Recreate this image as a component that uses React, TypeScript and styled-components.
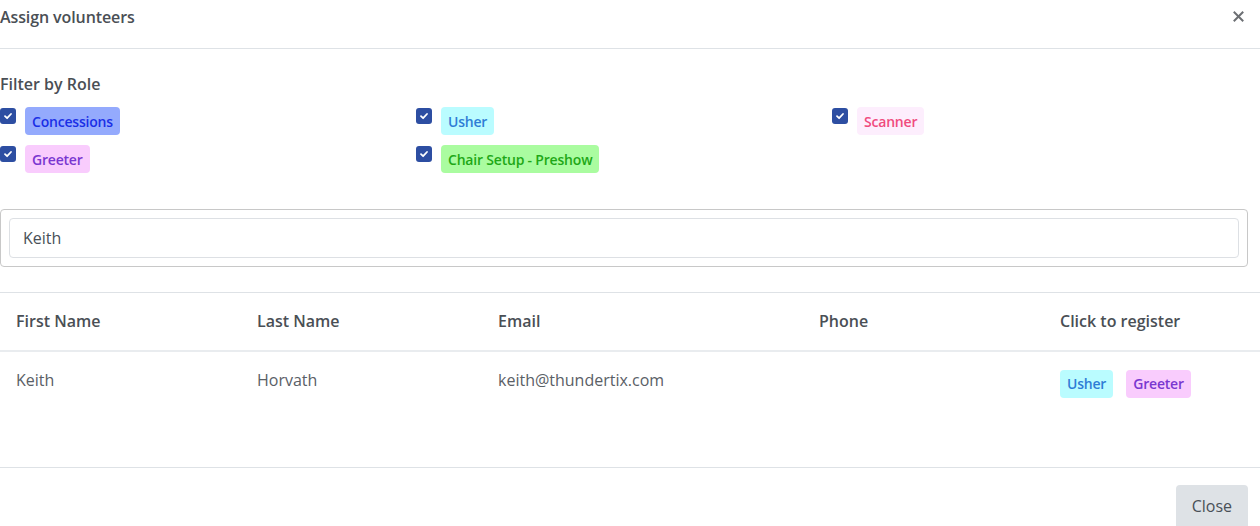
import React from 'react'
import styled, { createGlobalStyle } from 'styled-components'

const GlobalStyle = createGlobalStyle`
  html, body {
    margin: 0;
    padding: 0;
    background: #fff;
    font-family: "Open Sans", "Noto Sans", sans-serif;
    color: #495057;
  }
  * { box-sizing: border-box; }
`

type Tone = 'blue' | 'cyan' | 'pink' | 'violet' | 'green'

const tones: Record<Tone, { bg: string; fg: string }> = {
  blue: { bg: '#94aafd', fg: '#1a2fe6' },
  cyan: { bg: '#bafcff', fg: '#2f7dd6' },
  pink: { bg: '#fdeefd', fg: '#f04b7e' },
  violet: { bg: '#f9ccfd', fg: '#7a37d0' },
  green: { bg: '#aafca0', fg: '#1ea817' },
}

const Modal = styled.div`
  width: 1260px;
  height: 526px;
  overflow: hidden;
  display: flex;
  flex-direction: column;
`

const Header = styled.div`
  display: flex;
  justify-content: space-between;
  align-items: flex-start;
  padding: 5px 0 0 0;
  height: 49px;
  flex-shrink: 0;
  border-bottom: 1px solid #dee2e6;
`

const Title = styled.h5`
  margin: 0;
  font-size: 16px;
  line-height: 24px;
  font-weight: 600;
  color: #4a4f55;
  letter-spacing: -0.1px;
`

const CloseX = styled.button`
  border: 0;
  background: transparent;
  padding: 0;
  margin: 2px 16px 0 0;
  width: 12px;
  height: 20px;
  cursor: pointer;
`

const Body = styled.div`
  padding-top: 24px;
`

const Label = styled.div`
  font-size: 16px;
  line-height: 22px;
  font-weight: 600;
  color: #4a4f55;
  margin-bottom: 12px;
`

const RoleGrid = styled.div`
  display: grid;
  grid-template-columns: repeat(3, 416px);
  row-gap: 10px;
`

const RoleItem = styled.label`
  display: flex;
  align-items: flex-start;
  gap: 9px;
  height: 28px;
`

const Check = styled.span`
  width: 16px;
  height: 16px;
  margin-top: 1px;
  border-radius: 3px;
  background: #2d4ea2;
  display: flex;
  align-items: center;
  justify-content: center;
`

const Badge = styled.span<{ $tone: Tone }>`
  display: inline-flex;
  align-items: center;
  height: 28px;
  padding: 0 7px;
  border-radius: 4px;
  font-size: 14px;
  font-weight: 600;
  letter-spacing: -0.2px;
  background: ${({ $tone }) => tones[$tone].bg};
  color: ${({ $tone }) => tones[$tone].fg};
`

const SearchCard = styled.div`
  margin-top: 36px;
  width: 1248px;
  padding: 8px;
  border: 1px solid #c8c8c8;
  border-radius: 4px;
`

const SearchInput = styled.input`
  width: 100%;
  height: 40px;
  border: 1px solid #dde0e4;
  border-radius: 4px;
  padding: 0 13px;
  font-family: "Open Sans", "Noto Sans", sans-serif;
  font-size: 16px;
  color: #495057;
  outline: none;
`

const Table = styled.table`
  margin-top: 25px;
  width: 1260px;
  border-collapse: collapse;
  table-layout: fixed;
  border-top: 1px solid #dee2e6;
`

const Th = styled.th<{ $w?: number }>`
  width: ${({ $w }) => ($w ? `${$w}px` : 'auto')};
  text-align: left;
  padding: 17px 16px 18px;
  font-size: 16px;
  line-height: 22px;
  font-weight: 600;
  color: #4a4f55;
  border-bottom: 2px solid #e9ecef;
`

const Td = styled.td`
  padding: 18px 16px;
  vertical-align: top;
  font-size: 16px;
  line-height: 18px;
  color: #5a6066;
`

const Badges = styled.div`
  display: flex;
  gap: 13px;
`

const Cell = styled.div`
  padding-top: 1px;
`

const Footer = styled.div`
  margin-top: 51px;
  border-top: 1px solid #dee2e6;
  display: flex;
  justify-content: flex-end;
  padding: 17px 12px 0 0;
`

const Button = styled.button`
  border: 0;
  border-radius: 4px 4px 0 0;
  background: #dee2e6;
  color: #495057;
  font-family: "Open Sans", "Noto Sans", sans-serif;
  font-size: 16px;
  height: 44px;
  padding: 0 16px 2px;
`

const roles: { name: string; tone: Tone }[] = [
  { name: 'Concessions', tone: 'blue' },
  { name: 'Usher', tone: 'cyan' },
  { name: 'Scanner', tone: 'pink' },
  { name: 'Greeter', tone: 'violet' },
  { name: 'Chair Setup - Preshow', tone: 'green' },
]

function CheckMark() {
  return (
    <svg width="10" height="10" viewBox="0 0 10 10">
      <path d="M2 5.2 L4.1 7.2 L8 3" fill="none" stroke="#fff" strokeWidth="1.8" strokeLinecap="round" strokeLinejoin="round" />
    </svg>
  )
}

export default function App() {
  return (
    <Modal>
      <GlobalStyle />
      <Header>
        <Title>Assign volunteers</Title>
        <CloseX aria-label="Close">
          <svg width="11" height="11" viewBox="0 0 11 11">
            <path d="M1.5 1.5 L9.5 9.5 M9.5 1.5 L1.5 9.5" stroke="#6c6f73" strokeWidth="2" strokeLinecap="square" />
          </svg>
        </CloseX>
      </Header>

      <Body>
        <Label>Filter by Role</Label>
        <RoleGrid>
          {roles.map(r => (
            <RoleItem key={r.name}>
              <Check>
                <CheckMark />
              </Check>
              <Badge $tone={r.tone}>{r.name}</Badge>
            </RoleItem>
          ))}
        </RoleGrid>

        <SearchCard>
          <SearchInput defaultValue="Keith" />
        </SearchCard>

        <Table>
          <thead>
            <tr>
              <Th $w={241}>First Name</Th>
              <Th $w={241}>Last Name</Th>
              <Th $w={321}>Email</Th>
              <Th $w={241}>Phone</Th>
              <Th>Click to register</Th>
            </tr>
          </thead>
          <tbody>
            <tr>
              <Td><Cell>Keith</Cell></Td>
              <Td><Cell>Horvath</Cell></Td>
              <Td><Cell>keith@thundertix.com</Cell></Td>
              <Td></Td>
              <Td>
                <Badges>
                  <Badge $tone="cyan">Usher</Badge>
                  <Badge $tone="violet">Greeter</Badge>
                </Badges>
              </Td>
            </tr>
          </tbody>
        </Table>
      </Body>

      <Footer>
        <Button>Close</Button>
      </Footer>
    </Modal>
  )
}
